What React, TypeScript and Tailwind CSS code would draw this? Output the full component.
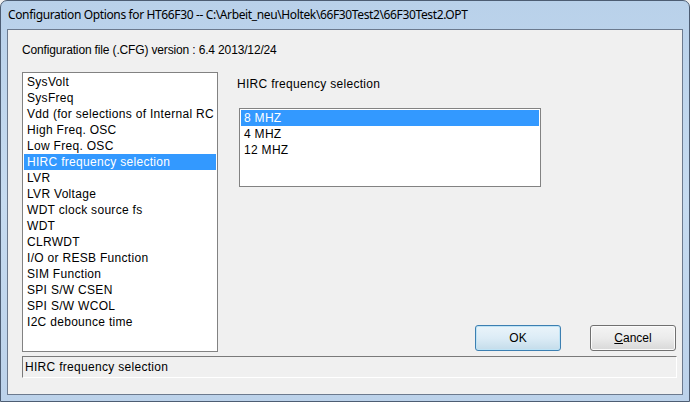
const items = [
  "SysVolt",
  "SysFreq",
  "Vdd (for selections of Internal RC",
  "High Freq. OSC",
  "Low Freq. OSC",
  "HIRC frequency selection",
  "LVR",
  "LVR Voltage",
  "WDT clock source fs",
  "WDT",
  "CLRWDT",
  "I/O or RESB Function",
  "SIM Function",
  "SPI S/W CSEN",
  "SPI S/W WCOL",
  "I2C debounce time",
];

const freqs = ["8 MHZ", "4 MHZ", "12 MHZ"];

export default function App() {
  return (
    <div className="w-[690px] h-[402px] overflow-hidden bg-[#f0f0f0]">
      {/* Fenster */}
      <div className="w-[690px] h-[402px] flex flex-col rounded-t-[7px] border border-[#4d5d73] bg-gradient-to-b from-[#b9d1ea] via-[#c6dbf0] to-[#bcd2ea] font-['Liberation_Sans',Arial,sans-serif] text-[12px] text-black">
        {/* Titelleiste */}
        <div className="h-[28px] flex items-center pl-[7px] font-['Noto_Sans',sans-serif] text-[12px] text-black tracking-[-0.37px]">
          Configuration Options for HT66F30 -- C:\Arbeit_neu\Holtek\66F30Test2\66F30Test2.OPT
        </div>

        {/* Client-Bereich */}
        <div className="flex-1 mx-[6px] mb-[6px] border border-[#6c7a8e] bg-[#f0f0f0] flex flex-col pl-[14px] pr-[5px] pt-[12px] pb-[15px]">
          <div className="h-[16px] leading-[16px] tracking-[-0.15px]">
            Configuration file (.CFG) version : 6.4 2013/12/24
          </div>

          <div className="flex mt-[14px] h-[280px]">
            {/* Liste links */}
            <div className="w-[196px] h-[280px] border border-[#828282] bg-white pt-[1px] px-[1px] overflow-hidden">
              {items.map((it, i) => (
                <div
                  key={it}
                  className={`h-[16px] leading-[16px] pl-[3px] whitespace-nowrap overflow-hidden tracking-[0.3px] ${
                    i === 5 ? "bg-[#3399ff] text-white" : ""
                  }`}
                >
                  {it}
                </div>
              ))}
            </div>

            {/* Rechte Seite */}
            <div className="flex-1 flex flex-col pl-[19px]">
              <div className="h-[16px] leading-[16px] mt-[4px] tracking-[0.3px]">HIRC frequency selection</div>
              <div className="ml-[2px] mt-[16px] w-[302px] h-[79px] border border-[#828282] bg-white pt-[1px] px-[1px]">
                {freqs.map((f, i) => (
                  <div
                    key={f}
                    className={`h-[16px] leading-[16px] pl-[3px] tracking-[0.3px] ${i === 0 ? "bg-[#3399ff] text-white" : ""}`}
                  >
                    {f}
                  </div>
                ))}
              </div>

              <div className="mt-auto flex justify-end gap-[29px] mb-[1px] mr-[1px]">
                <button className="w-[86px] h-[26px] rounded-[3px] border border-[#3c7fb1] bg-gradient-to-b from-[#eaf4fa] via-[#dcecf6] to-[#c4dcea] shadow-[inset_0_0_0_1px_#bfe3f5] text-[12px]">
                  OK
                </button>
                <button className="w-[86px] h-[26px] rounded-[3px] border border-[#707070] bg-gradient-to-b from-[#f4f4f4] via-[#ebebeb] to-[#d8d8d8] shadow-[inset_0_0_0_1px_#fbfbfb] text-[12px]">
                  <span className="underline">C</span>ancel
                </button>
              </div>
            </div>
          </div>

          {/* Statuszeile */}
          <div className="mt-[4px] h-[22px] border-t border-l border-[#7a7a7a] border-b border-r border-b-white border-r-white bg-[#f0f0f0] leading-[18px] pl-[2px] pt-[1px] tracking-[0.3px]">
            HIRC frequency selection
          </div>
        </div>
      </div>
    </div>
  );
}
